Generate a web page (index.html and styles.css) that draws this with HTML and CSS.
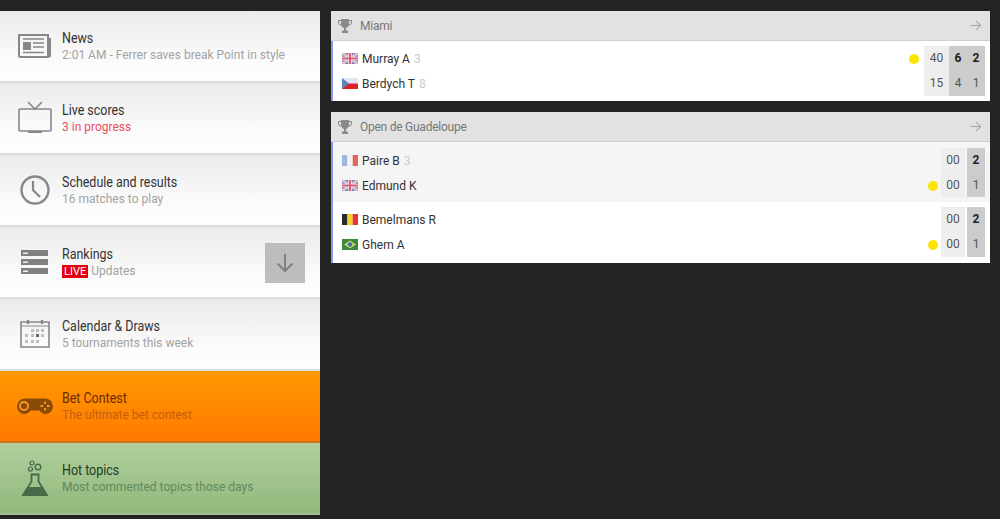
FILE: index.html
```html
<!DOCTYPE html>
<html lang="en">
<head>
  <meta charset="UTF-8">
  <title>Tennis live</title>
  <link rel="stylesheet" href="styles.css">
</head>
<body>
  <svg class="defs" width="0" height="0">
    <symbol id="trophy" viewBox="0 0 16 16">
      <path d="M4 1h8v1h3v2c0 2-1.500 3.500-3.500 3.700C11 9 10 9.700 9 10v2.500h2V15H5v-2.500h2V10C6 9.700 5 9 4.500 7.700 2.500 7.500 1 6 1 4V2h3zM2 3v1c0 1.300.9 2.300 2.100 2.600C4 5.900 4 5 4 3zm12 0h-2c0 2 0 2.900-.1 3.600C13.100 6.300 14 5.300 14 4z" fill="#8a8a8a"/>
    </symbol>
    <symbol id="go" viewBox="0 0 14 14">
      <path d="M1 7h11M7.500 2l5 5-5 5" fill="none" stroke="#a8a8a8" stroke-width="1.200"/>
    </symbol>
    <symbol id="gb" viewBox="0 0 16 11">
      <rect width="16" height="11" fill="#7f7fb4"/>
      <path d="M0 0l16 11M16 0L0 11" stroke="#eee" stroke-width="2.400"/>
      <path d="M0 0l16 11M16 0L0 11" stroke="#d8708a" stroke-width=".8"/>
      <path d="M8 0v11M0 5.500h16" stroke="#eee" stroke-width="3.600"/>
      <path d="M8 0v11M0 5.500h16" stroke="#d8607e" stroke-width="2"/>
    </symbol>
    <symbol id="cz" viewBox="0 0 16 11">
      <rect width="16" height="5.500" fill="#dfe6f4"/>
      <rect y="5.500" width="16" height="5.500" fill="#dd2226"/>
      <path d="M0 0l7 5.500L0 11z" fill="#5a86c4"/>
    </symbol>
    <symbol id="fr" viewBox="0 0 16 11">
      <rect width="5.400" height="11" fill="#9db6dc"/>
      <rect x="5.400" width="5.300" height="11" fill="#f2f2f6"/>
      <rect x="10.700" width="5.300" height="11" fill="#e2675c"/>
    </symbol>
    <symbol id="be" viewBox="0 0 16 11">
      <rect width="5.400" height="11" fill="#2a2a2a"/>
      <rect x="5.400" width="5.300" height="11" fill="#f0cf2a"/>
      <rect x="10.700" width="5.300" height="11" fill="#e5323b"/>
    </symbol>
    <symbol id="br" viewBox="0 0 16 11">
      <rect width="16" height="11" fill="#3c8a3f"/>
      <path d="M8 1.500l6 4-6 4-6-4z" fill="#c8d46a"/>
      <circle cx="8" cy="5.500" r="2.200" fill="#4a6fa8"/>
    </symbol>
  </svg>

  <div class="page">
    <nav class="menu">
      <a class="item">
        <svg class="ico" viewBox="0 0 36 36">
          <path d="M2 7h29v22H3.500A1.500 1.500 0 0 1 2 27.500z" fill="none" stroke="#888" stroke-width="2"/>
          <path d="M31 10h3v19h-3z" fill="#888"/>
          <path d="M6 14h8v8H6z" fill="#888"/>
          <path d="M6 11h21M16 15h11M16 19h11M6 24.500h21" stroke="#888" stroke-width="1.500"/>
        </svg>
        <div class="txt"><b>News</b><span>2:01 AM - Ferrer saves break Point in style</span></div>
      </a>
      <a class="item">
        <svg class="ico" viewBox="0 0 36 36">
          <rect x="2" y="9" width="32" height="22" rx="1" fill="none" stroke="#888" stroke-width="1.600"/>
          <path d="M11 2l7 7 7-7" fill="none" stroke="#888" stroke-width="1.600"/>
          <path d="M11 32h14" stroke="#888" stroke-width="2"/>
        </svg>
        <div class="txt"><b>Live scores</b><span class="red">3 in progress</span></div>
      </a>
      <a class="item">
        <svg class="ico" viewBox="0 0 36 36">
          <circle cx="18" cy="18" r="13.500" fill="none" stroke="#888" stroke-width="2.400"/>
          <path d="M16 9v9l7 7" fill="none" stroke="#888" stroke-width="2.200"/>
        </svg>
        <div class="txt"><b>Schedule and results</b><span>16 matches to play</span></div>
      </a>
      <a class="item">
        <svg class="ico" viewBox="0 0 36 36">
          <path d="M4 6h27v6H4zM4 15h27v6H4zM4 24h27v6H4z" fill="#808080"/>
          <path d="M6 8.500h5v1.500H6zM6 17.500h5v1.500H6zM6 26.500h5V28H6z" fill="#eee"/>
        </svg>
        <div class="txt"><b>Rankings</b><span><i class="live">LIVE</i> Updates</span></div>
        <div class="down">
          <svg width="18" height="20" viewBox="0 0 18 20"><path d="M9 1v17M1.500 10.500L9 18l7.500-7.500" fill="none" stroke="#808080" stroke-width="2"/></svg>
        </div>
      </a>
      <a class="item">
        <svg class="ico" viewBox="0 0 36 36">
          <path d="M4 6h28v25H4z" fill="none" stroke="#888" stroke-width="1.600"/>
          <path d="M4 10h28" stroke="#888" stroke-width="1"/>
          <path d="M11 4v4M25 4v4" stroke="#888" stroke-width="2.400"/>
          <path d="M14 13h3v3h-3zM19 13h3v3h-3zM24 13h3v3h-3zM8 18h3v3H8zM14 18h3v3h-3zM24 18h3v3h-3zM8 24h3v3H8zM14 24h3v3h-3zM19 24h3v3h-3z" fill="#c0c0c0"/>
          <path d="M19 18h3v3h-3z" fill="#666"/>
        </svg>
        <div class="txt"><b>Calendar &amp; Draws</b><span>5 tournaments this week</span></div>
      </a>
      <a class="item bet">
        <svg class="ico" viewBox="0 0 36 36">
          <path d="M8 10.500h20a8 8 0 0 1 8 8A7.500 7.500 0 0 1 28.500 26c-3 0-4.500-2-6.500-3.500h-8C12 24 10.500 26 7.500 26A7.500 7.500 0 0 1 0 18.500a8 8 0 0 1 8-8z" fill="#8a4a08"/>
          <circle cx="7" cy="18" r="4" fill="none" stroke="#ff9a1a" stroke-width="1.800"/>
          <path d="M28 13.500V16M28 20v2.500M23.500 18H26M30 18h2.500" stroke="#ff9a1a" stroke-width="1.800"/>
        </svg>
        <div class="txt"><b>Bet Contest</b><span>The ultimate bet contest</span></div>
      </a>
      <a class="item hot">
        <svg class="ico" viewBox="0 0 36 36">
          <circle cx="15" cy="3" r="2" fill="none" stroke="#48694a" stroke-width="1.200"/>
          <circle cx="13.500" cy="9" r="2" fill="none" stroke="#48694a" stroke-width="1.200"/>
          <circle cx="21" cy="7" r="2.800" fill="none" stroke="#48694a" stroke-width="1.400"/>
          <path d="M13.500 14.500h9M14.500 14.500v7L6 35h24l-8.500-13.500v-7" fill="none" stroke="#48694a" stroke-width="1.800"/>
          <path d="M11 27h14l5 8H6z" fill="#48694a"/>
        </svg>
        <div class="txt"><b>Hot topics</b><span>Most commented topics those days</span></div>
      </a>
    </nav>

    <main class="scores">
      <section class="panel">
        <header class="head">
          <svg class="cup"><use href="#trophy"/></svg>
          <span>Miami</span>
          <svg class="arrow"><use href="#go"/></svg>
        </header>
        <div class="match">
          <div class="players">
            <div class="row"><svg class="flag"><use href="#gb"/></svg>Murray A<em>3</em><i class="ball"></i></div>
            <div class="row"><svg class="flag"><use href="#cz"/></svg>Berdych T<em>8</em></div>
          </div>
          <div class="game">
            <div>40</div>
            <div>15</div>
          </div>
          <div class="sets">
            <div><b>6</b><b>2</b></div>
            <div><span>4</span><span>1</span></div>
          </div>
        </div>
      </section>

      <section class="panel">
        <header class="head">
          <svg class="cup"><use href="#trophy"/></svg>
          <span>Open de Guadeloupe</span>
          <svg class="arrow"><use href="#go"/></svg>
        </header>
        <div class="match shaded wide">
          <div class="players">
            <div class="row"><svg class="flag"><use href="#fr"/></svg>Paire B<em>3</em></div>
            <div class="row"><svg class="flag"><use href="#gb"/></svg>Edmund K<i class="ball"></i></div>
          </div>
          <div class="game">
            <div>00</div>
            <div>00</div>
          </div>
          <div class="sets">
            <div><b>2</b></div>
            <div><span>1</span></div>
          </div>
        </div>
        <div class="match wide last">
          <div class="players">
            <div class="row"><svg class="flag"><use href="#be"/></svg>Bemelmans R</div>
            <div class="row"><svg class="flag"><use href="#br"/></svg>Ghem A<i class="ball"></i></div>
          </div>
          <div class="game">
            <div>00</div>
            <div>00</div>
          </div>
          <div class="sets">
            <div><b>2</b></div>
            <div><span>1</span></div>
          </div>
        </div>
      </section>
    </main>
  </div>
</body>
</html>
```

FILE: styles.css
```css
* { box-sizing: border-box; }
html, body { margin: 0; height: 100%; }
body {
  background: #232323;
  font-family: Roboto, "Liberation Sans", sans-serif;
  overflow: hidden;
}
.defs { display: block; height: 0; }
.page {
  display: flex;
  gap: 11px;
  padding-top: 11px;
}

/* left menu */
.menu { width: 320px; flex: none; }
.item {
  display: flex;
  align-items: center;
  height: 72px;
  padding: 0 15px 0 17px;
  background: linear-gradient(#ebebeb, #fafafa 65%, #fff);
  border-bottom: 2px solid #dcdcdc;
}
.ico { width: 36px; height: 36px; flex: none; margin-right: 9px; overflow: visible; }
.txt { flex: 1; padding-bottom: 1px; }
/* the original title face is condensed, Roboto is squeezed to fit */
.txt b {
  display: block;
  font-weight: 400;
  font-size: 15px;
  line-height: 18px;
  color: #333;
  transform: scaleX(.83);
  transform-origin: left;
  white-space: nowrap;
}
.txt span {
  display: block;
  font-size: 12px;
  line-height: 16px;
  color: #a3a3a3;
}
.txt .red { color: #e8505c; }
.live {
  display: inline-block;
  padding: 0 2px;
  font-style: normal;
  font-size: 11px;
  line-height: 13px;
  background: #e2000f;
  color: #fff;
}
.down {
  display: flex;
  align-items: center;
  justify-content: center;
  width: 40px;
  height: 40px;
  margin-top: 2px;
  background: #bdbdbd;
}
.bet {
  background: linear-gradient(#ff9900, #ff7a00);
  border-bottom-color: #d0751c;
}
.bet .txt b { color: #6b2c00; }
.bet .txt span { color: #c45e10; }
.hot {
  background: linear-gradient(#b0cf9d, #92b97d);
  border-bottom-color: #a0c090;
}
.hot .txt b { color: #1f3a1f; }
.hot .txt span { color: #5f8a5c; }

/* score panels */
.scores { width: 659px; flex: none; }
.panel {
  background: #fff;
  margin-bottom: 11px;
}
.head {
  display: flex;
  align-items: center;
  height: 30px;
  padding: 0 8px 0 6px;
  background: #e2e2e2;
  border-bottom: 1px solid #cfcfcf;
  font-size: 12px;
  letter-spacing: -0.25px;
  color: #777;
}
.head span { flex: 1; }
.cup { width: 16px; height: 16px; margin-right: 7px; }
.arrow { width: 13px; height: 13px; }
.match {
  display: flex;
  padding: 5px 5px 5px 9px;
  border-left: 2px solid #8c98f0;
  font-size: 12px;
  color: #333;
}
.match.wide { height: 60px; }
.match.shaded { background: #f5f5f5; padding-top: 6px; }
.match.last { height: 61px; padding-bottom: 6px; }
.players { flex: 1; }
.row {
  display: flex;
  align-items: center;
  height: 25px;
}
.row em {
  margin-left: 4px;
  font-style: normal;
  color: #ccc;
}
.flag { width: 16px; height: 11px; margin-right: 4px; }
.ball {
  width: 10px;
  height: 10px;
  margin-left: auto;
  margin-right: 5px;
  border-radius: 50%;
  background: #fce500;
}
.wide .ball { margin-right: 3px; }
.game {
  width: 25px;
  background: #eee;
  color: #555;
  text-align: center;
}
.wide .game { width: 24px; }
.game div, .sets div {
  height: 25px;
  line-height: 25px;
}
.sets {
  background: #ccc;
  color: #555;
}
.wide .sets { margin-left: 2px; }
.sets div { display: flex; }
.sets b, .sets span {
  width: 18px;
  text-align: center;
}
.sets b { color: #222; font-weight: 700; }
```
